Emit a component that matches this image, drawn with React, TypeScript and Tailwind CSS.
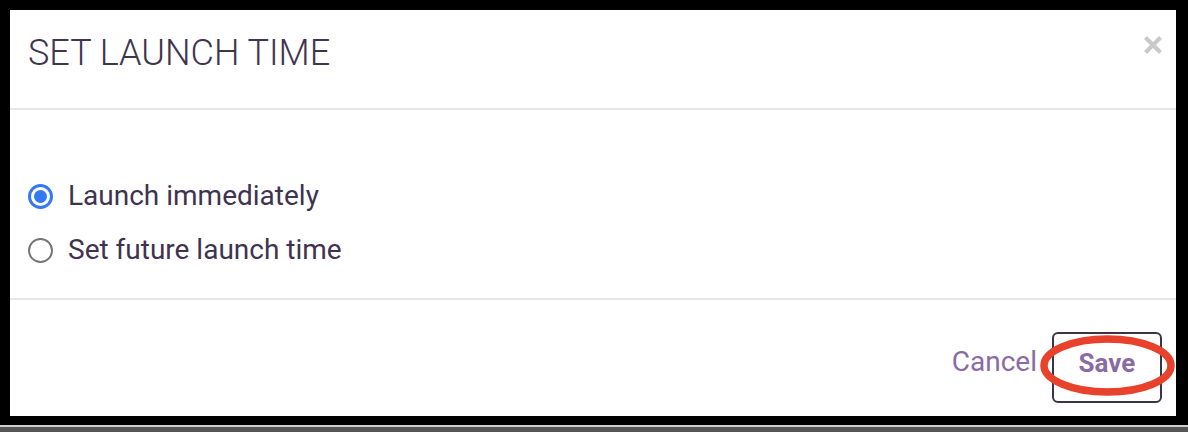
import React from "react";

export default function App() {
  return (
    <div
      className="relative w-[1188px] h-[432px] bg-black overflow-hidden"
      style={{ fontFamily: "Roboto, 'Liberation Sans', sans-serif" }}
    >
      <div className="pt-[10px] pl-[10px] pr-[12px]">
        <div className="relative bg-white h-[406px] flex flex-col">
          {/* Header */}
          <div className="h-[100px] border-b-2 border-[#e5e5e5] flex items-start justify-between pl-[18px] pr-[13px]">
            <div className="pt-[21px] text-[36px] leading-[44px] font-light text-[#40354e]">
              SET LAUNCH TIME
            </div>
            <div className="mt-[25px] w-[20px] h-[20px]">
              <svg width="20" height="20" viewBox="0 0 20 20">
                <path d="M2.5 2.5 L17.5 17.5 M17.5 2.5 L2.5 17.5" stroke="#c9c9c9" strokeWidth="4.2" strokeLinecap="butt" />
              </svg>
            </div>
          </div>
          {/* Body */}
          <div className="h-[190px] border-b-2 border-[#e5e5e5] pl-[18px] pt-[66px] flex flex-col gap-[14px]">
            <div className="h-[40px] flex items-center gap-[15px]">
              <div className="w-[25px] h-[25px] rounded-full border-[3px] border-[#3478f6] flex items-center justify-center">
                <div className="w-[13px] h-[13px] rounded-full bg-[#3478f6]" />
              </div>
              <span className="text-[28px] leading-[40px] text-[#3f3350]">Launch immediately</span>
            </div>
            <div className="h-[40px] flex items-center gap-[15px]">
              <div className="w-[25px] h-[25px] rounded-full border-2 border-[#767676] bg-white" />
              <span className="text-[28px] leading-[40px] text-[#3f3350]">Set future launch time</span>
            </div>
          </div>
          {/* Footer */}
          <div className="flex-1 flex justify-end items-start pt-[32px] pr-[14px]">
            <div className="h-[71px] flex items-center gap-[15px]">
              <span className="text-[28px] leading-[40px] text-[#8a6ca5] mb-[12px]">Cancel</span>
              <div className="w-[110px] h-[71px] border-2 border-[#3d3349] rounded-[6px] flex items-center justify-center">
                <span className="text-[26px] leading-[40px] font-bold text-[#8a6ca5] mb-[10px]">Save</span>
              </div>
            </div>
          </div>
          {/* Red annotation ellipse */}
          <svg
            className="absolute left-[1030px] top-[325px] pointer-events-none"
            width="146"
            height="80"
            viewBox="0 0 146 80"
          >
            <ellipse cx="67.5" cy="30.5" rx="63.5" ry="26.5" fill="none" stroke="#e8412c" strokeWidth="7.5" />
          </svg>
        </div>
      </div>
      {/* bottom strip */}
      <div className="absolute left-0 right-0 top-[425px] h-[2px] bg-[#cfcfcf]" />
      <div className="absolute left-0 right-0 top-[427px] h-[5px] bg-[#565656]" />
    </div>
  );
}
